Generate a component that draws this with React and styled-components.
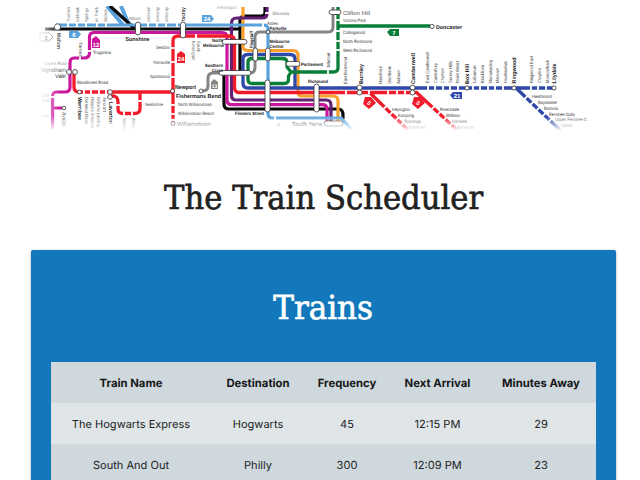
import React from "react";
import styled, { createGlobalStyle } from "styled-components";

const GlobalStyle = createGlobalStyle`
  html, body { margin: 0; background: #fff; overflow: hidden; }
  * { box-sizing: border-box; }
`;

const Page = styled.main`
  width: 640px;
  height: 480px;
  overflow: hidden;
  background: #fff;
  color: #212121;
  font-family: Inter, "Liberation Sans", sans-serif;
  text-rendering: geometricPrecision;
`;

const MapBanner = styled.svg`
  display: block;
  width: 640px;
  height: 135px;
  font-family: "Liberation Sans", Arial, sans-serif;
`;

const Container = styled.div`
  width: 585px;
  margin-left: 31px;
`;

const SlabText = styled.span`
  display: inline-block;
  white-space: nowrap;
  transform: scaleX(${(p) => p.$stretch});
  -webkit-text-stroke: 0.7px currentColor;
`;

const PageTitle = styled.h1`
  height: 115px;
  margin: 0;
  padding-top: 43px;
  font: 400 33px/40px "DejaVu Serif", serif;
  display: flex;
  justify-content: center;
`;

const Card = styled.section`
  height: 260px;
  padding: 0 20px;
  border-radius: 2px;
  background: #1278bb;
  box-shadow: 0 1px 3px rgba(0, 0, 0, 0.35);
`;

const CardTitle = styled.h2`
  height: 112px;
  margin: 0;
  padding-top: 38px;
  color: #fff;
  font: 400 33px/40px "DejaVu Serif", serif;
  display: flex;
  justify-content: center;
`;

const Table = styled.table`
  width: 545px;
  table-layout: fixed;
  border-collapse: collapse;
  font-size: 11.3px;
  line-height: 15px;
  text-align: center;
`;

const Col = styled.col`
  width: ${(p) => p.$width}px;
`;

const Row = styled.tr`
  height: 41.2px;
  background: ${(p) => (p.$light ? "#e0e5e8" : "#cfd8dc")};
`;

const HeadCell = styled.th`
  padding: 2px 0 0;
  font-weight: 700;
  color: #151719;
`;

const Cell = styled.td`
  padding: 2px 0 0;
  font-size: 11.05px;
  color: #212427;
`;

const columns = [
  ["Train Name", 160], ["Destination", 94], ["Frequency", 84],
  ["Next Arrival", 97], ["Minutes Away", 110],
];
const trains = [
  ["The Hogwarts Express", "Hogwarts", "45", "12:15 PM", "29"],
  ["South And Out", "Philly", "300", "12:09 PM", "23"],
];

const C = {
  sky: "#5aa2dc", black: "#080808", pink: "#c9189c", red: "#f01c2c",
  orange: "#faa12d", blue: "#3048a8", green: "#087e38", purple: "#642074", grey: "#858585",
};

// [path, colour, stroke width]
const tracks = [
  ["M107 6L123 25M121 6L129 25", C.sky, 4],
  ["M110 6L134 28M45 29H240M265 7V13Q265 16 261 16H245Q240 16 240 20V71M224 71V104Q224 109 229 109H338Q343 109 343 115V119", C.black, 3.2],
  ["M243 7V46Q243 50.5 248 50.5H293Q298 50.5 298 55V92Q298 96 302 96H333Q338 96 338 101V122", C.orange, 3.2],
  ["M267 7V14Q267 18 262 18H237Q231.5 18 231.5 23V95Q231.5 100 236 100H326Q331 100 331 105V122", C.purple, 3.2],
  ["M138 32.5H94Q89.5 32.5 89.5 37V53Q89.5 58 84 58H74Q70 58 70 63V87Q70 92 65 92H57Q52.5 92 52.5 96V133M53 108H62M138 32.5H222Q227 32.5 227 37V100Q227 104.7 232 104.7H322Q327 104.7 327 109V122", C.pink, 3.2],
  ["M74 73V87Q74 92 79 92H173M173 126V41Q173 36 178 36H229Q234.5 36 234.5 41V87Q234.5 92.5 239 92.5H417M111 96H114Q118 97 118 102V109Q118 113.5 123 113.5H134Q140 113.5 140 109V92M369 92L408 130M416 92L457 130", C.red, 3.3],
  ["M248 54.5H290Q295 54.5 295 59V88M248 54.5Q243 54.5 243 59V83Q243 88 248 88H554M516 88L560 130", C.blue, 3.3],
  ["M282 58.5H252Q248 58.5 248 62V79Q248 83.5 252 83.5H284Q288.5 83.5 288.5 79V76L291 72L287 67V62Q287 58.5 282 58.5M291 72H333Q338 72 338 68V7M338 26H430", C.green, 3.3],
  ["M250 73Q255 73 255 67V37Q255 32 260 32H328Q333 32 333 27V7M202 91Q208 91 208 86V78Q208 73 213 73H222", C.grey, 3],
  ["M56 25H220 263Q268 25 268 29V114Q268 118 272 118H341L352 130", C.sky, 3.2],
];

// White gaps that mark minor stations: [x, y, track direction]
const breaks = [
  ...[68, 77, 86, 97, 106, 148, 157, 166, 177, 263, 275].map((x) => [x, x === 275 ? 118 : 25, "h"]),
  ...[84, 91, 99, 106, 124, 132].map((x) => [x, x > 115 ? 113.5 : 92, "h"]),
  ...[48, 62, 77, 105, 114, 120].map((y) => [173, y, "v"]),
  ...[196, 346, 369, 388, 397, 405].map((x) => [x, x === 196 ? 36 : 92.5, "h"]),
  ...[428, 435, 443, 450, 458, 473, 480, 488, 495, 503, 531, 538, 546].map((x) => [x, 88, "h"]),
  ...[20, 31, 41, 50].map((y) => [338, y, "v"]),
  [328, 72, "h"], [89, 51, "v"], [80, 58, "h"], [267, 13, "v"], [118, 105, "v"], [52, 97, "v"], [140, 101, "v"],
];

const diagonals = [
  [385, 107.5], [391, 113.5], [397, 119.2], [402, 124.2],
  [433, 107.8], [439, 113.3], [445, 118.9], [451, 124.4],
  [526, 97.5], [532, 103.3], [538, 109], [544, 114.7], [550, 120.5],
];

// [x, y, width, height]
const stations = [
  [222, 39.5, 25, 4.6], [219, 70.5, 32, 4.7], [253, 48, 4.6, 13],
  [265.5, 48, 4.6, 13], [265, 80, 5, 32], [286, 61.5, 14, 4.7],
  [329, 10, 12, 4.5], [314, 84, 5, 28], [324, 121, 19, 5], [135.5, 22, 5, 13],
  [180.5, 22, 5, 16], [357, 85, 5, 5], [357, 90, 5, 5], [410, 85, 5, 5], [410, 90, 5, 5],
];
const dots = [
  [57.5, 27, 3.2], [69, 72, 2.5], [75, 72, 2.5], [79.5, 92, 1.9], [110, 92, 2.3], [110, 97, 2.3],
  [64, 108, 1.8], [172.5, 91, 2], [173, 123.5, 2], [201, 91, 2], [268, 32, 1.8],
  [432, 26.5, 2.1], [467, 88, 2.1], [514, 88, 2.1], [554, 88, 2.1],
];

// [text, x, y, rendered length, bold, rotation, colour, size]
const labels = [
  ["Melton", 56.5, 33, 16, 1, 90, "#555", 5.5],
  ["Truganina", 93, 53.5, 18, 0, 0, "#333"],
  ["Tarneit", 79, 42, 15, 0, 90, "#555"],
  ["Sayers Road", 44, 65, 23, 0, 0, "#999"],
  ["Wyndham", 41, 71.5, 25, 0, 0, "#666", 6],
  ["Vale", 55, 78, 11, 0, 0, "#333", 6],
  ["Blackforest Road", 77, 84, 31, 0, 0, "#333"],
  ["Werribee", 77.5, 97, 23, 1, 90, "#222", 5.5],
  ["Derrimut Road", 85, 97, 27, 0, 90, "#666"],
  ["Hoppers Crossing", 91, 97, 31, 0, 90, "#666"],
  ["Williams Landing", 97, 97, 30, 0, 90, "#666"],
  ["Aircraft", 103, 97, 15, 0, 90, "#666"],
  ["Laverton", 108.5, 102, 22, 1, 90, "#222", 5.5],
  ["Avalon", 62, 112, 15, 0, 90, "#666", 6],
  ["Little", 42, 97, 7, 0, 0, "#aaa"],
  ["River", 42, 102, 8, 0, 0, "#aaa"],
  ["Lara", 42, 117, 7, 0, 0, "#bbb"],
  ["Westona", 123, 118, 12, 0, 90, "#666"],
  ["Altona", 132, 118, 11, 0, 90, "#666"],
  ["Toolern", 70, 22, 15, 0, -90, "#777"],
  ["ockbank", 79, 22, 15, 0, -90, "#777"],
  ["Springs", 88, 22, 14, 0, -90, "#777"],
  ["er Park", 98, 22, 15, 0, -90, "#777"],
  ["Ardeer", 107, 22, 13, 0, -90, "#777"],
  ["Albion", 129, 19.5, 12, 0, 0, "#777"],
  ["Sunshine", 125.5, 41, 24, 1, 0, "#222", 5.7],
  ["ottenham", 150, 22, 15, 0, -90, "#777"],
  ["ootscray", 159, 22, 15, 0, -90, "#777"],
  ["ootscray", 168, 22, 15, 0, -90, "#777"],
  ["tscray", 184.5, 21, 14, 1, -90, "#333", 5.5],
  ["Kensington", 217, 9, 20, 0, 0, "#aaa"],
  ["Seddon", 156, 49.2, 14, 0, 0, "#444"],
  ["Yarraville", 153, 63.5, 17, 0, 0, "#444"],
  ["Spotswood", 150, 78, 20, 0, 0, "#444"],
  ["South", 197, 41, 11, 0, 90, "#555"],
  ["Kensington", 191.5, 41, 19, 0, 90, "#555"],
  ["North", 212, 42, 11, 1, 0, "#222"],
  ["Melbourne", 203, 47, 21, 1, 0, "#222"],
  ["Southern", 205, 66.5, 18, 1, 0, "#222"],
  ["Cross", 212, 71.5, 11, 1, 0, "#222"],
  ["Newport", 175, 88.5, 21, 1, 0, "#222", 5.7],
  ["Fishermans Bend", 176, 97.5, 45, 1, 0, "#222", 5.7],
  ["Seaholme", 145, 106, 18, 0, 0, "#444"],
  ["North Williamstown", 178, 106, 34, 0, 0, "#444"],
  ["Williamstown Beach", 178, 115, 36, 0, 0, "#444"],
  ["Williamstown", 177, 125.5, 34, 0, 0, "#333", 6],
  ["Macaulay", 272.5, 15, 17, 0, 0, "#777"],
  ["Arden", 267, 24.5, 11, 0, 0, "#333"],
  ["Parkville", 269.5, 30, 17, 1, 0, "#222"],
  ["Melbourne", 269.5, 43, 20, 1, 0, "#222"],
  ["Central", 269.5, 48, 14, 1, 0, "#222"],
  ["Flagstaff", 253, 48, 17, 1, -90, "#222"],
  ["Flinders Street", 235, 115, 29, 1, 0, "#222"],
  ["Parliament", 301, 66, 22, 1, 0, "#222"],
  ["Richmond", 308, 83, 20, 1, 0, "#222"],
  ["Jolimont", 330, 68, 15, 0, -90, "#333"],
  ["South Yarra", 292, 126, 30, 0, 0, "#222", 6],
  ["P", 277, 127, 3, 0, 0, "#555"],
  ["East Richmond", 347, 84, 27, 0, -90, "#333"],
  ["Clifton Hill", 343, 15, 27, 0, 0, "#555", 5.8],
  ["Victoria Park", 343, 21.5, 23, 0, 0, "#444"],
  ["Collingwood", 343, 34, 22, 0, 0, "#333"],
  ["North Richmond", 343, 42.5, 29, 0, 0, "#333"],
  ["West Richmond", 343, 52, 29, 0, 0, "#333"],
  ["Doncaster", 436, 28.5, 26, 1, 0, "#222", 5.5],
  ["Burnley", 362.5, 84, 20, 1, -90, "#222", 5.5],
  ["Hawthorn", 382, 84, 18, 0, -90, "#444"],
  ["Glenferrie", 391, 84, 18, 0, -90, "#444"],
  ["Auburn", 400, 84, 14, 0, -90, "#444"],
  ["Camberwell", 415, 84, 31, 1, -90, "#222", 5.5],
  ["East Camberwell", 429, 83, 31, 0, -90, "#444"],
  ["Canterbury", 436.5, 83, 20, 0, -90, "#444"],
  ["Chatham", 444, 83, 15, 0, -90, "#444"],
  ["Surrey Hills", 451.5, 83, 22, 0, -90, "#444"],
  ["Mont Albert", 459, 83, 22, 0, -90, "#444"],
  ["Box Hill", 468.5, 84, 20, 1, -90, "#222", 5.5],
  ["Laburnum", 476, 83, 18, 0, -90, "#444"],
  ["Blackburn", 484, 83, 18, 0, -90, "#444"],
  ["Nunawading", 491.5, 83, 23, 0, -90, "#444"],
  ["Mitcham", 499, 83, 15, 0, -90, "#444"],
  ["Heatherdale", 506.5, 83, 22, 0, -90, "#444"],
  ["Ringwood", 516, 83.5, 26, 1, -90, "#222", 5.5],
  ["Ringwood East", 533, 83, 27, 0, -90, "#444"],
  ["Croydon", 540.5, 83, 15, 0, -90, "#444"],
  ["Mooroolbark", 548.5, 83, 23, 0, -90, "#444"],
  ["Lilydale", 556, 83.5, 20, 1, -90, "#222", 5.5],
  ["Heyington", 392, 111, 18, 0, 0, "#333"],
  ["Kooyong", 398, 117, 16, 0, 0, "#333"],
  ["Tooronga", 404, 123, 17, 0, 0, "#444"],
  ["Gardiner", 409, 128.5, 16, 0, 0, "#222"],
  ["Riversdale", 440, 111, 19, 0, 0, "#333"],
  ["Willison", 446, 116.5, 14, 0, 0, "#333"],
  ["Hartwell", 452, 123, 15, 0, 0, "#444"],
  ["Burwood", 457, 128.5, 17, 0, 0, "#222"],
  ["Heathmont", 532, 98, 20, 0, 0, "#333"],
  ["Bayswater", 538, 104, 19, 0, 0, "#333"],
  ["Boronia", 544, 110, 14, 0, 0, "#333"],
  ["Ferntree Gully", 549, 115.5, 26, 0, 0, "#333"],
  ["Upper Ferntree G", 555, 121, 32, 0, 0, "#555"],
  ["Upwey", 561, 127, 12, 0, 0, "#444"],
];

// [path, colour, number, x, y, rotation, text size]
const badges = [
  ["M69 31H78L81 34L78 38H69Z", C.sky, "6", 74, 37, 0, 6],
  ["M40 33H49L53 37L49 41H40Z", "#fff", "3", 46, 39.5, 0, 6],
  ["M92 39L96 36L100 40V48H92Z", C.pink, "12", 96, 46.5, 0, 6],
  ["M202 15H211L214 19L211 22H202Z", C.sky, "24", 207, 21, 0, 6],
  ["M177 54L181 51L185 54V63H177Z", C.red, "24", 181, 61, 0, 6],
  ["M211 82L214 79L218 82V89H211Z", C.grey, "13", 214.5, 88, 0, 5],
  ["M387 32L390 29H399V36H390Z", C.green, "7", 394, 35, 0, 6],
  ["M365 97H371L376 103L369 109L363 104Z", C.red, "5", 369, 105, 45, 6],
  ["M414 97H420L425 103L418 109L412 104Z", C.red, "5", 418, 105, 45, 6],
  ["M450 95L453 92H462V99H453Z", C.blue, "21", 457, 98, 0, 6],
];

function RailMap() {
  return (
    <MapBanner viewBox="0 0 640 135" aria-label="Rail network map">
      <defs>
        <linearGradient id="leftFade">
          <stop offset="0.15" stopColor="#fff" />
          <stop offset="1" stopColor="#fff" stopOpacity="0" />
        </linearGradient>
        <linearGradient id="bottomFade" x1="0" y1="0" x2="0" y2="1">
          <stop offset="0" stopColor="#fff" stopOpacity="0" />
          <stop offset="1" stopColor="#fff" />
        </linearGradient>
      </defs>
      {tracks.map(([d, stroke, width]) => (
        <path key={d} d={d} stroke={stroke} strokeWidth={width} fill="none" strokeLinejoin="round" />
      ))}
      <g fill="#fff">
        {breaks.map(([x, y, dir], i) => dir === "h"
          ? <rect key={i} x={x - 0.9} y={y - 2} width="1.8" height="4" />
          : <rect key={i} x={x - 2} y={y - 0.9} width="4" height="1.8" />)}
        {diagonals.map(([x, y]) => (
          <rect key={x} x={x - 0.9} y={y - 3} width="1.8" height="6" transform={`rotate(44 ${x} ${y})`} />
        ))}
      </g>
      <g fill="#fff" stroke="#333" strokeWidth="0.8">
        {stations.map(([x, y, w, h]) => (
          <rect key={`${x}-${y}`} x={x} y={y} width={w} height={h} rx={Math.min(w, h) / 2} />
        ))}
        {dots.map(([x, y, r]) => <circle key={`${x}-${y}`} cx={x} cy={y} r={r} />)}
      </g>
      {badges.map(([d, fill, label, x, y, turn, size]) => (
        <g key={d}>
          <path d={d} fill={fill} stroke={fill === "#fff" ? "#777" : "none"} strokeWidth="0.8" />
          <text x={x} y={y} fontSize={size} fontWeight="700" textAnchor="middle"
            fill={fill === "#fff" ? "#777" : "#fff"} transform={`rotate(${turn} ${x} ${y - 2})`}>{label}</text>
        </g>
      ))}
      {labels.map(([text, x, y, length, bold, turn, fill, size = 4.6]) => (
        <text key={`${text}-${x}`} x={x} y={y} fontSize={size} fontWeight={bold ? 700 : 400} fill={fill}
          textLength={length} lengthAdjust="spacingAndGlyphs" transform={`rotate(${turn} ${x} ${y})`}>{text}</text>
      ))}
      <rect x="30" y="0" width="30" height="135" fill="url(#leftFade)" />
      <rect x="30" y="116" width="570" height="15" fill="url(#bottomFade)" />
      <path d="M30 130H600V135H30ZM30 0H600V6H30ZM588 0H640V135H588Z" fill="#fff" />
    </MapBanner>
  );
}

export default function App() {
  return (
    <Page>
      <GlobalStyle />
      <RailMap />
      <Container>
        <PageTitle><SlabText $stretch={0.93}>The Train Scheduler</SlabText></PageTitle>
        <Card>
          <CardTitle><SlabText $stretch={0.94}>Trains</SlabText></CardTitle>
          <Table>
            <colgroup>{columns.map(([name, width]) => <Col key={name} $width={width} />)}</colgroup>
            <thead>
              <Row>{columns.map(([name]) => <HeadCell key={name}>{name}</HeadCell>)}</Row>
            </thead>
            <tbody>
              {trains.map((train, i) => (
                <Row key={train[0]} $light={i % 2 === 0}>
                  {train.map((value) => <Cell key={value}>{value}</Cell>)}
                </Row>
              ))}
            </tbody>
          </Table>
        </Card>
      </Container>
    </Page>
  );
}
